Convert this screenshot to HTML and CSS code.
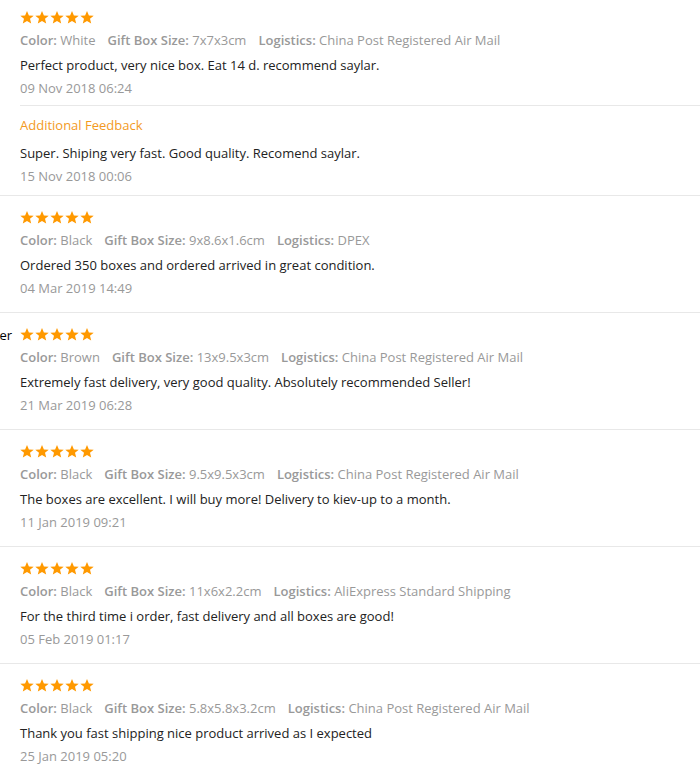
FILE: index.html
```html
<!DOCTYPE html>
<html>
<head>
<meta charset="utf-8">
<link rel="stylesheet" href="styles.css">
</head>
<body>
<div class="feedback-list">

  <div class="review first">
    <div class="buyer"></div>
    <div class="main">
      <div class="stars">
        <svg class="star-row" width="75" height="16" viewBox="0 0 75 16"><g fill="#f90"><polygon points="7,1 8.9,5.4 13.7,5.7 10,8.8 11.2,13.6 7,11 2.8,13.6 4,8.8 0.3,5.7 5.1,5.4"/><polygon transform="translate(15,0)" points="7,1 8.9,5.4 13.7,5.7 10,8.8 11.2,13.6 7,11 2.8,13.6 4,8.8 0.3,5.7 5.1,5.4"/><polygon transform="translate(30,0)" points="7,1 8.9,5.4 13.7,5.7 10,8.8 11.2,13.6 7,11 2.8,13.6 4,8.8 0.3,5.7 5.1,5.4"/><polygon transform="translate(45,0)" points="7,1 8.9,5.4 13.7,5.7 10,8.8 11.2,13.6 7,11 2.8,13.6 4,8.8 0.3,5.7 5.1,5.4"/><polygon transform="translate(60,0)" points="7,1 8.9,5.4 13.7,5.7 10,8.8 11.2,13.6 7,11 2.8,13.6 4,8.8 0.3,5.7 5.1,5.4"/></g></svg>
      </div>
      <div class="meta"><span class="item"><b>Color:</b> White</span><span class="item"><b>Gift Box Size:</b> 7x7x3cm</span><span class="item"><b>Logistics:</b> China Post Registered Air Mail</span></div>
      <div class="content">Perfect product, very nice box. Eat 14 d. recommend saylar.</div>
      <div class="date">09 Nov 2018 06:24</div>
      <div class="additional">
        <div class="add-title">Additional Feedback</div>
        <div class="content">Super. Shiping very fast. Good quality. Recomend saylar.</div>
        <div class="date">15 Nov 2018 00:06</div>
      </div>
    </div>
  </div>

  <div class="review">
    <div class="buyer"></div>
    <div class="main">
      <div class="stars">
        <svg class="star-row" width="75" height="16" viewBox="0 0 75 16"><g fill="#f90"><polygon points="7,1 8.9,5.4 13.7,5.7 10,8.8 11.2,13.6 7,11 2.8,13.6 4,8.8 0.3,5.7 5.1,5.4"/><polygon transform="translate(15,0)" points="7,1 8.9,5.4 13.7,5.7 10,8.8 11.2,13.6 7,11 2.8,13.6 4,8.8 0.3,5.7 5.1,5.4"/><polygon transform="translate(30,0)" points="7,1 8.9,5.4 13.7,5.7 10,8.8 11.2,13.6 7,11 2.8,13.6 4,8.8 0.3,5.7 5.1,5.4"/><polygon transform="translate(45,0)" points="7,1 8.9,5.4 13.7,5.7 10,8.8 11.2,13.6 7,11 2.8,13.6 4,8.8 0.3,5.7 5.1,5.4"/><polygon transform="translate(60,0)" points="7,1 8.9,5.4 13.7,5.7 10,8.8 11.2,13.6 7,11 2.8,13.6 4,8.8 0.3,5.7 5.1,5.4"/></g></svg>
      </div>
      <div class="meta"><span class="item"><b>Color:</b> Black</span><span class="item"><b>Gift Box Size:</b> 9x8.6x1.6cm</span><span class="item"><b>Logistics:</b> DPEX</span></div>
      <div class="content">Ordered 350 boxes and ordered arrived in great condition.</div>
      <div class="date">04 Mar 2019 14:49</div>
    </div>
  </div>

  <div class="review">
    <div class="buyer"><span class="buyer-name">er</span></div>
    <div class="main">
      <div class="stars">
        <svg class="star-row" width="75" height="16" viewBox="0 0 75 16"><g fill="#f90"><polygon points="7,1 8.9,5.4 13.7,5.7 10,8.8 11.2,13.6 7,11 2.8,13.6 4,8.8 0.3,5.7 5.1,5.4"/><polygon transform="translate(15,0)" points="7,1 8.9,5.4 13.7,5.7 10,8.8 11.2,13.6 7,11 2.8,13.6 4,8.8 0.3,5.7 5.1,5.4"/><polygon transform="translate(30,0)" points="7,1 8.9,5.4 13.7,5.7 10,8.8 11.2,13.6 7,11 2.8,13.6 4,8.8 0.3,5.7 5.1,5.4"/><polygon transform="translate(45,0)" points="7,1 8.9,5.4 13.7,5.7 10,8.8 11.2,13.6 7,11 2.8,13.6 4,8.8 0.3,5.7 5.1,5.4"/><polygon transform="translate(60,0)" points="7,1 8.9,5.4 13.7,5.7 10,8.8 11.2,13.6 7,11 2.8,13.6 4,8.8 0.3,5.7 5.1,5.4"/></g></svg>
      </div>
      <div class="meta"><span class="item"><b>Color:</b> Brown</span><span class="item"><b>Gift Box Size:</b> 13x9.5x3cm</span><span class="item"><b>Logistics:</b> China Post Registered Air Mail</span></div>
      <div class="content">Extremely fast delivery, very good quality. Absolutely recommended Seller!</div>
      <div class="date">21 Mar 2019 06:28</div>
    </div>
  </div>

  <div class="review">
    <div class="buyer"></div>
    <div class="main">
      <div class="stars">
        <svg class="star-row" width="75" height="16" viewBox="0 0 75 16"><g fill="#f90"><polygon points="7,1 8.9,5.4 13.7,5.7 10,8.8 11.2,13.6 7,11 2.8,13.6 4,8.8 0.3,5.7 5.1,5.4"/><polygon transform="translate(15,0)" points="7,1 8.9,5.4 13.7,5.7 10,8.8 11.2,13.6 7,11 2.8,13.6 4,8.8 0.3,5.7 5.1,5.4"/><polygon transform="translate(30,0)" points="7,1 8.9,5.4 13.7,5.7 10,8.8 11.2,13.6 7,11 2.8,13.6 4,8.8 0.3,5.7 5.1,5.4"/><polygon transform="translate(45,0)" points="7,1 8.9,5.4 13.7,5.7 10,8.8 11.2,13.6 7,11 2.8,13.6 4,8.8 0.3,5.7 5.1,5.4"/><polygon transform="translate(60,0)" points="7,1 8.9,5.4 13.7,5.7 10,8.8 11.2,13.6 7,11 2.8,13.6 4,8.8 0.3,5.7 5.1,5.4"/></g></svg>
      </div>
      <div class="meta"><span class="item"><b>Color:</b> Black</span><span class="item"><b>Gift Box Size:</b> 9.5x9.5x3cm</span><span class="item"><b>Logistics:</b> China Post Registered Air Mail</span></div>
      <div class="content">The boxes are excellent. I will buy more! Delivery to kiev-up to a month.</div>
      <div class="date">11 Jan 2019 09:21</div>
    </div>
  </div>

  <div class="review">
    <div class="buyer"></div>
    <div class="main">
      <div class="stars">
        <svg class="star-row" width="75" height="16" viewBox="0 0 75 16"><g fill="#f90"><polygon points="7,1 8.9,5.4 13.7,5.7 10,8.8 11.2,13.6 7,11 2.8,13.6 4,8.8 0.3,5.7 5.1,5.4"/><polygon transform="translate(15,0)" points="7,1 8.9,5.4 13.7,5.7 10,8.8 11.2,13.6 7,11 2.8,13.6 4,8.8 0.3,5.7 5.1,5.4"/><polygon transform="translate(30,0)" points="7,1 8.9,5.4 13.7,5.7 10,8.8 11.2,13.6 7,11 2.8,13.6 4,8.8 0.3,5.7 5.1,5.4"/><polygon transform="translate(45,0)" points="7,1 8.9,5.4 13.7,5.7 10,8.8 11.2,13.6 7,11 2.8,13.6 4,8.8 0.3,5.7 5.1,5.4"/><polygon transform="translate(60,0)" points="7,1 8.9,5.4 13.7,5.7 10,8.8 11.2,13.6 7,11 2.8,13.6 4,8.8 0.3,5.7 5.1,5.4"/></g></svg>
      </div>
      <div class="meta"><span class="item"><b>Color:</b> Black</span><span class="item"><b>Gift Box Size:</b> 11x6x2.2cm</span><span class="item"><b>Logistics:</b> AliExpress Standard Shipping</span></div>
      <div class="content">For the third time i order, fast delivery and all boxes are good!</div>
      <div class="date">05 Feb 2019 01:17</div>
    </div>
  </div>

  <div class="review">
    <div class="buyer"></div>
    <div class="main">
      <div class="stars">
        <svg class="star-row" width="75" height="16" viewBox="0 0 75 16"><g fill="#f90"><polygon points="7,1 8.9,5.4 13.7,5.7 10,8.8 11.2,13.6 7,11 2.8,13.6 4,8.8 0.3,5.7 5.1,5.4"/><polygon transform="translate(15,0)" points="7,1 8.9,5.4 13.7,5.7 10,8.8 11.2,13.6 7,11 2.8,13.6 4,8.8 0.3,5.7 5.1,5.4"/><polygon transform="translate(30,0)" points="7,1 8.9,5.4 13.7,5.7 10,8.8 11.2,13.6 7,11 2.8,13.6 4,8.8 0.3,5.7 5.1,5.4"/><polygon transform="translate(45,0)" points="7,1 8.9,5.4 13.7,5.7 10,8.8 11.2,13.6 7,11 2.8,13.6 4,8.8 0.3,5.7 5.1,5.4"/><polygon transform="translate(60,0)" points="7,1 8.9,5.4 13.7,5.7 10,8.8 11.2,13.6 7,11 2.8,13.6 4,8.8 0.3,5.7 5.1,5.4"/></g></svg>
      </div>
      <div class="meta"><span class="item"><b>Color:</b> Black</span><span class="item"><b>Gift Box Size:</b> 5.8x5.8x3.2cm</span><span class="item"><b>Logistics:</b> China Post Registered Air Mail</span></div>
      <div class="content">Thank you fast shipping nice product arrived as I expected</div>
      <div class="date">25 Jan 2019 05:20</div>
    </div>
  </div>

</div>
</body>
</html>
```
FILE: styles.css
```css
html, body {
  margin: 0;
  padding: 0;
  background: #fff;
}
body {
  font-family: "Open Sans", "Liberation Sans", sans-serif;
  font-size: 13px;
  color: #333;
  overflow: hidden;
}
.feedback-list {
  display: flex;
  flex-direction: column;
}
.review {
  display: flex;
  border-top: 1px solid #e8e8e8;
  padding: 14px 0 15px 0;
}
.review.first {
  border-top: none;
  padding-top: 10px;
  padding-bottom: 10px;
}
.buyer {
  width: 12px;
  flex: none;
  display: flex;
  justify-content: flex-end;
  white-space: nowrap;
  line-height: 16px;
  height: 16px;
  color: #000;
}
.main {
  margin-left: 8px;
  flex: 1;
  min-width: 0;
}
.stars {
  height: 16px;
  display: flex;
  align-items: center;
}
.star-row {
  display: block;
}
.meta {
  margin-top: 5px;
  line-height: 18px;
  color: #999;
  white-space: nowrap;
}
.meta .item {
  margin-right: 12px;
}
.meta b {
  font-weight: 600;
  color: #999;
}
.content {
  margin-top: 7px;
  line-height: 18px;
  color: #222;
}
.date {
  margin-top: 5px;
  line-height: 18px;
  color: #999;
}
.additional {
  margin-top: 8px;
  border-top: 1px solid #e8e8e8;
  padding-top: 10px;
}
.add-title {
  line-height: 18px;
  color: #f39a1e;
}
.additional .content {
  margin-top: 10px;
}
```
